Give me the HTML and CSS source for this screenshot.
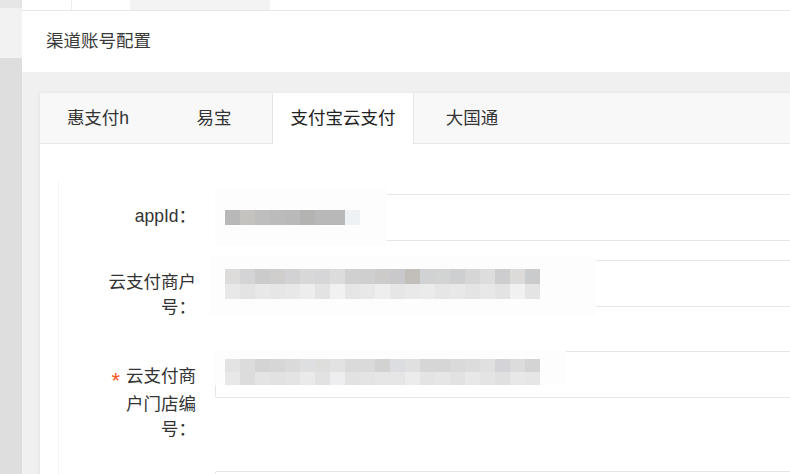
FILE: index.html
```html
<!DOCTYPE html>
<html>
  <head>
    <meta charset="utf-8">
    <link rel="stylesheet" href="styles.css">
  </head>
  <body>
    <div class="sidebar">
      <div class="sb-top"></div>
      <div class="sb-mid"></div>
      <div class="sb-rest"></div>
    </div>
    <div class="main">
      <div class="topbar">
        <div class="tb-item first"></div>
        <div class="tb-item second"></div>
        <div class="tb-item current"></div>
      </div>
      <div class="header">渠道账号配置</div>
      <div class="content">
        <div class="card">
          <ul class="tabs">
            <li class="tab">惠支付h</li>
            <li class="tab">易宝</li>
            <li class="tab active">支付宝云支付</li>
            <li class="tab">大国通</li>
          </ul>
          <div class="card-body">
            <div class="form">
              <div class="form-item">
                <label class="label">appId：</label>
                <div class="input">
                  <div class="mask mask-appid"></div>
                  <div class="blur blur-appid"></div>
                </div>
              </div>
              <div class="form-item">
                <label class="label">云支付商户号：</label>
                <div class="input">
                  <div class="mask mask-merchant"></div>
                  <div class="blur blur-merchant"></div>
                </div>
              </div>
              <div class="form-item">
                <label class="label label-tall"><span class="required">*</span>云支付商户门店编号：</label>
                <div class="input">
                  <div class="mask mask-store"></div>
                  <div class="blur blur-store"></div>
                </div>
              </div>
              <div class="form-item">
                <label class="label"></label>
                <div class="input"></div>
              </div>
            </div>
          </div>
        </div>
      </div>
    </div>
  </body>
</html>
```

FILE: styles.css
```css
html, body {
    margin: 0;
    height: 474px;
    overflow: hidden;
}

body {
    display: flex;
    font-family: "Liberation Sans", "Noto Sans CJK SC", sans-serif;
    font-size: 17.5px;
    color: #333;
    background: #f0f0f0;
}

.sidebar {
    width: 22px;
    flex-shrink: 0;
    display: flex;
    flex-direction: column;
}

.sb-top {
    height: 8px;
    background: #e6e6e6;
}

.sb-mid {
    height: 50px;
    background: #f2f2f2;
}

.sb-rest {
    flex: 1;
    background: #dedede;
}

.main {
    width: 1000px;
    flex-shrink: 0;
    display: flex;
    flex-direction: column;
}

.topbar {
    height: 10px;
    flex-shrink: 0;
    display: flex;
    background: #fff;
    border-bottom: 1px solid #e8e8e8;
    box-shadow: 0 1px 2px rgba(0, 0, 0, .04);
}

.tb-item.first {
    width: 49px;
    border-right: 1px solid #ececec;
}

.tb-item.second {
    width: 58px;
}

.tb-item.current {
    width: 140px;
    background: #f3f3f3;
}

.header {
    height: 61px;
    flex-shrink: 0;
    line-height: 61px;
    padding-left: 24px;
    background: #fff;
    color: #3a3a3a;
}

.content {
    flex: 1;
    min-height: 0;
    padding: 21px 0 0 18px;
}

.card {
    height: 600px;
    background: #fff;
    box-shadow: 0 1px 4px 0 rgba(0, 0, 0, .08);
}

.tabs {
    display: flex;
    margin: 0;
    padding: 0;
    list-style: none;
    height: 50px;
    background: #f8f8f8;
    border-bottom: 1px solid #e6e6e6;
}

.tab {
    min-width: 116px;
    box-sizing: border-box;
    padding: 0 17.5px;
    line-height: 50px;
    text-align: center;
    white-space: nowrap;
}

.tab.active {
    height: 51px;
    background: #fff;
    border-left: 1px solid #e6e6e6;
    border-right: 1px solid #e6e6e6;
    color: #222;
}

.card-body {
    padding: 38px 0 0 18px;
}

.form {
    border-left: 1px solid #f3f3f3;
    padding: 12px 0 0 18px;
}

.form-item {
    display: flex;
    margin-bottom: 19px;
}

.label {
    width: 100px;
    flex-shrink: 0;
    padding: 10px 19px 12px;
    line-height: 25px;
    text-align: right;
    color: #333;
}

.label-tall {
    padding-top: 13px;
    padding-bottom: 10px;
}

.required {
    color: #ff5722;
    font-size: 22px;
    line-height: 1;
    margin-right: 6px;
    vertical-align: -6px;
}

.input {
    flex: 1;
    height: 47px;
    box-sizing: border-box;
    border: 1px solid #e6e6e6;
    border-radius: 2px;
    background: #fff;
    position: relative;
}

.mask {
    position: absolute;
    background: #fdfdfd;
}

.blur {
    position: absolute;
    left: 9px;
    background-repeat: no-repeat;
}

.mask-appid {
    left: -1px;
    top: -8px;
    width: 172px;
    height: 59px;
}

.blur-appid {
    top: 15px;
    width: 135px;
    height: 15px;
    background-image: linear-gradient(90deg,
        #b8b8b8 0 15px, #c5c3c0 15px 30px, #bebebf 30px 45px, #bbbbbb 45px 60px,
        #b9b9b9 60px 75px, #b3b3b1 75px 90px, #b8b8b8 90px 120px, #eef2f5 120px 135px);
}

.mask-merchant {
    left: -6px;
    top: -4px;
    width: 386px;
    height: 58px;
}

.blur-merchant {
    top: 8px;
    width: 315px;
    height: 30px;
    background-size: 315px 15px;
    background-position: 0 0, 0 15px;
    background-image:
        linear-gradient(90deg,
            #dedcda 0 15px, #d4d4d6 15px 30px, #cbcbcb 30px 45px, #d0cecc 45px 60px,
            #d2d2d4 60px 75px, #d8d8d8 75px 90px, #d6d6d8 90px 105px, #dcdcdc 105px 120px,
            #d0d0d0 120px 135px, #cfcfcf 135px 150px, #cdcbc9 150px 165px, #c9c9cb 165px 180px,
            #c2bfbb 180px 195px, #d1d2d4 195px 210px, #d2d4d4 210px 225px, #cecfd1 225px 240px,
            #d6d6d6 240px 255px, #dcdddc 255px 270px, #cdcdcf 270px 285px, #dcdbd9 285px 300px,
            #cacbcd 300px 315px),
        linear-gradient(90deg,
            #e8e8e8 0 15px, #e3e3e3 15px 30px, #e8e8e8 30px 45px, #e6e6e6 45px 60px,
            #e8e8e8 60px 75px, #ededed 75px 90px, #e3e3e3 90px 105px, #f0f1f0 105px 120px,
            #e6e6e6 120px 135px, #e8e8e8 135px 150px, #eeeeee 150px 165px, #e6e6e6 165px 180px,
            #e9e9e9 180px 195px, #ebebeb 195px 210px, #e6e6e6 210px 225px, #e8e8e8 225px 240px,
            #e4e4e4 240px 255px, #e8e8e8 255px 270px, #e3e3e3 270px 285px, #f1f1f1 285px 300px,
            #e4e4e4 300px 315px);
}

.mask-store {
    left: -3px;
    top: -2px;
    width: 353px;
    height: 35px;
}

.blur-store {
    top: 7px;
    width: 315px;
    height: 26px;
    background-size: 315px 13px;
    background-position: 0 0, 0 13px;
    background-image:
        linear-gradient(90deg,
            #e3e3e3 0 15px, #dcdcdc 15px 30px, #d4d4d4 30px 45px, #d6d6d6 45px 60px,
            #dadada 60px 75px, #dedfe0 75px 90px, #dededc 90px 105px, #e2e2e2 105px 120px,
            #dadada 120px 150px, #d2d2d2 150px 165px, #dcdde0 165px 180px,
            #e0e0e0 180px 195px, #d6d6d6 195px 225px, #dadada 225px 240px,
            #dcdcdc 240px 255px, #e0e0e0 255px 270px, #d4d4d8 270px 285px, #dcdcdc 285px 300px,
            #d4d4d4 300px 315px),
        linear-gradient(90deg,
            #e8e8e8 0 15px, #dcdcdc 15px 30px, #e4e4e4 30px 45px, #e2e2e2 45px 60px,
            #e4e4e4 60px 75px, #eaeaea 75px 90px, #e2e2e2 90px 105px, #eeeef0 105px 120px,
            #e2e2e2 120px 135px, #e4e4e4 135px 150px, #e6e6e6 150px 180px,
            #ececec 180px 195px, #e4e4e4 195px 210px, #e6e6e6 210px 225px, #e2e2e2 225px 240px,
            #e8e8e8 240px 255px, #e4e4e4 255px 270px, #e0e0e0 270px 285px, #e8e8e8 285px 300px,
            #e6e6e6 300px 315px);
}
```
